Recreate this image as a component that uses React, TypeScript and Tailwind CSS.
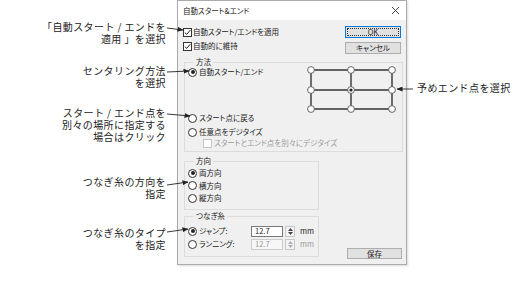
import React from 'react';

const jp = "font-['Noto_Sans_CJK_JP','Noto_Sans',sans-serif]";

function CheckBox({ checked = false, disabled = false }: { checked?: boolean; disabled?: boolean }) {
    return (
        <span className={`w-[9px] h-[9px] shrink-0 border bg-white flex items-center justify-center ${disabled ? 'border-[#c4c4c4]' : 'border-[#333]'}`}>
            {checked && (
                <svg width="7" height="7" viewBox="0 0 7 7">
                    <polyline points="0.8,3.6 2.7,5.4 6.3,1.2" fill="none" stroke="#222" strokeWidth="1" />
                </svg>
            )}
        </span>
    );
}

function Radio({ checked = false }: { checked?: boolean }) {
    return (
        <span className="w-[9px] h-[9px] shrink-0 rounded-full border border-[#333] bg-white flex items-center justify-center">
            {checked && <span className="w-[4px] h-[4px] rounded-full bg-[#222]" />}
        </span>
    );
}

function RadioRow({ label, checked }: { label: string; checked?: boolean }) {
    return (
        <div className="h-[10px] flex items-center gap-[2px]">
            <Radio checked={checked} />
            <span>{label}</span>
        </div>
    );
}

function Spinner({ disabled = false }: { disabled?: boolean }) {
    const c = disabled ? '#b0b0b0' : '#444';
    return (
        <span className="w-[10px] h-[11px] border border-[#c8c8c8] bg-[#f4f4f4] flex flex-col items-center justify-center gap-[1px]">
            <svg width="5" height="3" viewBox="0 0 5 3"><path d="M0,3 L2.5,0 L5,3 Z" fill={c} /></svg>
            <svg width="5" height="3" viewBox="0 0 5 3"><path d="M0,0 L2.5,3 L5,0 Z" fill={c} /></svg>
        </span>
    );
}

function EndPointGrid() {
    const xs = [4, 44, 85];
    const ys = [4, 24, 43];
    return (
        <svg width="90" height="47" viewBox="0 0 90 47" className="-mt-[1px]">
            {ys.map((y) => (
                <line key={'h' + y} x1={xs[0]} y1={y} x2={xs[2]} y2={y} stroke="#333" strokeWidth="1.4" />
            ))}
            {xs.map((x) => (
                <line key={'v' + x} x1={x} y1={ys[0]} x2={x} y2={ys[2]} stroke="#333" strokeWidth="1.4" />
            ))}
            {ys.map((y) =>
                xs.map((x) => (
                    <g key={x + '-' + y}>
                        <circle cx={x} cy={y} r="3.4" fill="#fff" stroke="#555" strokeWidth="0.9" />
                        {x === 44 && y === 24 && <circle cx={x} cy={y} r="1.6" fill="#222" />}
                    </g>
                ))
            )}
        </svg>
    );
}

function Dialog() {
    return (
        <div className={`w-[230px] h-[265px] shrink-0 border border-[#ababab] bg-[#f0f0f0] flex flex-col text-[7.5px] leading-[10px] text-[#1a1a1a] [font-feature-settings:'palt'] shadow-[1px_1px_2px_rgba(0,0,0,0.15)]`}>
            <div className="h-[19px] bg-white flex items-center justify-between pl-[5px] pr-[7px]">
                <span>自動スタート&amp;エンド</span>
                <svg width="7" height="7" viewBox="0 0 7 7">
                    <path d="M0,0 L7,7 M7,0 L0,7" stroke="#333" strokeWidth="0.9" />
                </svg>
            </div>

            <div className="flex justify-between pl-[5px] pr-[5px] pt-[6px]">
                <div className="flex flex-col gap-[2px]">
                    <div className="h-[12px] flex items-center gap-[1px]">
                        <CheckBox checked />
                        <span>自動スタート/エンドを適用</span>
                    </div>
                    <div className="h-[12px] flex items-center gap-[1px]">
                        <CheckBox checked />
                        <span>自動的に維持</span>
                    </div>
                </div>
                <div className="flex flex-col gap-[4px]">
                    <button className="w-[56px] h-[12px] border border-[#0078d7] bg-[#e1e1e1] p-[1px] flex">
                        <span className="flex-1 border border-dotted border-[#333] flex items-center justify-center leading-none">OK</span>
                    </button>
                    <button className="w-[56px] h-[12px] border border-[#adadad] bg-[#e1e1e1] flex items-center justify-center leading-none">
                        キャンセル
                    </button>
                </div>
            </div>

            <fieldset className="mt-[3px] ml-[6px] mr-[3px] border border-[#dcdcdc] pl-[3px] pb-[3px]">
                <legend className="ml-[6px] px-[2px] leading-[10px]">方法</legend>
                <div className="flex justify-between items-start pr-[5px]">
                    <RadioRow label="自動スタート/エンド" checked />
                    <EndPointGrid />
                </div>
                <RadioRow label="スタート点に戻る" />
                <div className="mt-[4px]">
                    <RadioRow label="任意点をデジタイズ" />
                </div>
                <div className="mt-[1px] ml-[15px] h-[10px] flex items-center gap-[2px] text-[#9a9a9a]">
                    <CheckBox disabled />
                    <span>スタートとエンド点を別々にデジタイズ</span>
                </div>
            </fieldset>

            <div className="flex">
                <div className="ml-[6px] w-[135px] flex flex-col">
                    <fieldset className="mt-[4px] border border-[#dcdcdc] pl-[3px] pt-[2px] pb-[6px] flex flex-col gap-[2.5px]">
                        <legend className="ml-[6px] px-[2px] leading-[10px]">方向</legend>
                        <RadioRow label="両方向" checked />
                        <RadioRow label="横方向" />
                        <RadioRow label="縦方向" />
                    </fieldset>
                    <fieldset className="mt-[1px] border border-[#dcdcdc] pl-[3px] pt-[4px] pb-[6px] flex flex-col gap-[1px]">
                        <legend className="ml-[6px] px-[2px] leading-[10px]">つなぎ糸</legend>
                        <div className="h-[12px] flex items-center">
                            <div className="w-[63px] flex items-center gap-[2px]">
                                <Radio checked />
                                <span>ジャンプ:</span>
                            </div>
                            <span className="w-[32px] h-[11px] border border-[#7a7a7a] bg-white pl-[3px] flex items-center leading-none">12.7</span>
                            <span className="ml-[2px]"><Spinner /></span>
                            <span className="ml-[5px]">mm</span>
                        </div>
                        <div className="h-[12px] flex items-center">
                            <div className="w-[63px] flex items-center gap-[2px]">
                                <Radio />
                                <span>ランニング:</span>
                            </div>
                            <span className="w-[32px] h-[11px] border border-[#cccccc] bg-[#f7f7f7] text-[#9a9a9a] pl-[3px] flex items-center leading-none">12.7</span>
                            <span className="ml-[2px]"><Spinner disabled /></span>
                            <span className="ml-[5px] text-[#9a9a9a]">mm</span>
                        </div>
                    </fieldset>
                </div>
                <div className="flex-1 flex justify-end items-start pr-[4px]">
                    <button className="mt-[96px] w-[55px] h-[11px] border border-[#adadad] bg-[#e1e1e1] flex items-center justify-center leading-none">
                        保存
                    </button>
                </div>
            </div>
        </div>
    );
}

export default function App() {
    return (
        <div className={`relative w-[517px] h-[287px] bg-white flex overflow-hidden ${jp}`}>
            <div className="w-[177px] shrink-0 flex flex-col items-end pr-[11px] text-[10px] leading-[12px] tracking-[0.4px] text-[#222] text-right">
                <p className="mt-[21px]">「自動スタート / エンドを<br />適用 」を選択</p>
                <p className="mt-[20px]">センタリング方法<br />を選択</p>
                <p className="mt-[18px]">スタート / エンド点を<br />別々の場所に指定する<br />場合はクリック</p>
                <p className="mt-[33px]">つなぎ糸の方向を<br />指定</p>
                <p className="mt-[27px]">つなぎ糸のタイプ<br />を指定</p>
            </div>

            <Dialog />

            <div className="pl-[10px] pt-[82px] text-[10px] leading-[12px] tracking-[0.4px] text-[#222] whitespace-nowrap">
                予めエンド点を選択
            </div>

            <svg className="absolute inset-0 pointer-events-none" width="517" height="287" viewBox="0 0 517 287">
                <defs>
                    <marker id="ah" markerUnits="userSpaceOnUse" markerWidth="6" markerHeight="5" refX="5.5" refY="2.5" orient="auto">
                        <path d="M0,0 L6,2.5 L0,5 Z" fill="#222" />
                    </marker>
                </defs>
                <g stroke="#222" strokeWidth="0.9" fill="none">
                    <line x1="167" y1="28" x2="183" y2="30" markerEnd="url(#ah)" />
                    <line x1="167" y1="72" x2="189" y2="71" markerEnd="url(#ah)" />
                    <line x1="167" y1="114" x2="190" y2="116" markerEnd="url(#ah)" />
                    <line x1="167" y1="185" x2="188" y2="182" markerEnd="url(#ah)" />
                    <line x1="167" y1="232" x2="188" y2="229" markerEnd="url(#ah)" />
                    <line x1="413" y1="89" x2="397" y2="89" markerEnd="url(#ah)" />
                </g>
            </svg>
        </div>
    );
}
